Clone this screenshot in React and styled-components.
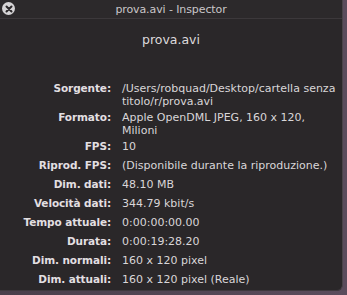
import React from 'react';
import styled, { createGlobalStyle } from 'styled-components';

const GlobalStyle = createGlobalStyle`
  html, body {
    margin: 0;
    padding: 0;
    background: #4d414f;
  }
  body {
    font-family: "DejaVu Sans", "Liberation Sans", sans-serif;
  }
`;

const Desk = styled.div`
  width: 347px;
  height: 295px;
  background: linear-gradient(90deg, #4a3f4b 0%, #5b4c5c 100%);
  overflow: hidden;
`;

const Window = styled.div`
  width: 343px;
  height: 291px;
  background: #2a2729;
  border-right: 1px solid #4a4449;
  border-bottom: 1px solid #3e383d;
  border-bottom-right-radius: 6px;
  box-sizing: border-box;
  display: flex;
  flex-direction: column;
`;

const TitleBar = styled.div`
  position: relative;
  height: 17px;
  padding-top: 1px;
  display: flex;
  align-items: center;
  justify-content: center;
  border-bottom: 1px solid #3c383b;
  background: #2c292b;
`;

const TitleText = styled.span`
  font-size: 11px;
  line-height: 13px;
  color: #c9c6c8;
  letter-spacing: -0.1px;
`;

const CloseButton = styled.div`
  position: absolute;
  left: 2px;
  top: 2px;
  width: 13px;
  height: 13px;
  border-radius: 50%;
  background: #d6d4d6;
  display: flex;
  align-items: center;
  justify-content: center;
`;

const Heading = styled.div`
  margin-top: 13px;
  text-align: center;
  font-size: 12.5px;
  line-height: 15px;
  color: #dddadc;
`;

const Grid = styled.div`
  margin-top: 35px;
  display: grid;
  grid-template-columns: 111px 1fr;
  grid-auto-rows: minmax(16px, auto);
  column-gap: 11px;
  row-gap: 3px;
  line-height: 13px;
`;

const Label = styled.div`
  text-align: right;
  font-size: 10.5px;
  font-weight: bold;
  letter-spacing: -0.1px;
  color: #e2dfe1;
  white-space: nowrap;
`;

const Value = styled.div`
  font-size: 11px;
  color: #d9d6d8;
  white-space: nowrap;
`;

const Line = styled.div``;

const rows = [
  ['Sorgente:', ['/Users/robquad/Desktop/cartella senza', 'titolo/r/prova.avi']],
  ['Formato:', ['Apple OpenDML JPEG, 160 x 120,', 'Milioni']],
  ['FPS:', ['10']],
  ['Riprod. FPS:', ['(Disponibile durante la riproduzione.)']],
  ['Dim. dati:', ['48.10 MB']],
  ['Velocità dati:', ['344.79 kbit/s']],
  ['Tempo attuale:', ['0:00:00:00.00']],
  ['Durata:', ['0:00:19:28.20']],
  ['Dim. normali:', ['160 x 120 pixel']],
  ['Dim. attuali:', ['160 x 120 pixel (Reale)']],
];

const App = () => (
  <Desk>
    <GlobalStyle />
    <Window>
      <TitleBar>
        <CloseButton>
          <svg width="8" height="8" viewBox="0 0 8 8">
            <path d="M1.5 1.5 L6.5 6.5 M6.5 1.5 L1.5 6.5" stroke="#2a2729" strokeWidth="2" strokeLinecap="round" />
          </svg>
        </CloseButton>
        <TitleText>prova.avi - Inspector</TitleText>
      </TitleBar>
      <Heading>prova.avi</Heading>
      <Grid>
        {rows.map(([label, lines]) => (
          <React.Fragment key={label}>
            <Label>{label}</Label>
            <Value>
              {lines.map((line) => (
                <Line key={line}>{line}</Line>
              ))}
            </Value>
          </React.Fragment>
        ))}
      </Grid>
    </Window>
  </Desk>
);

export default App;
